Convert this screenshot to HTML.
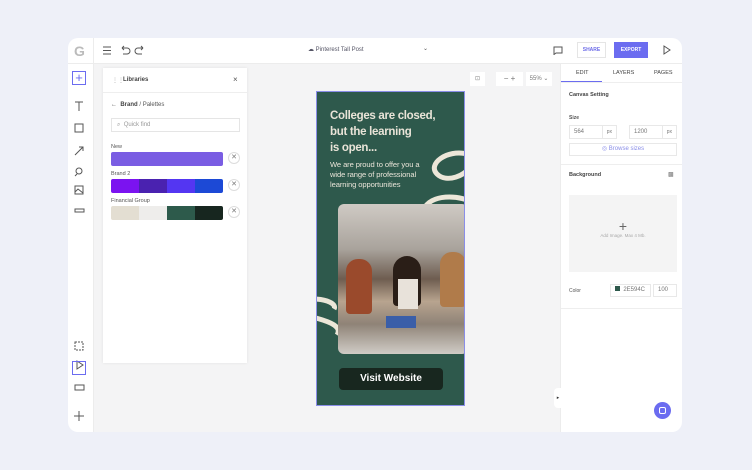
<!DOCTYPE html><html><head><style>
*{box-sizing:border-box;margin:0;padding:0}
body{width:752px;height:470px;background:#eef0f8;font-family:"Liberation Sans",sans-serif;position:relative;overflow:hidden;color:#333}
.a{position:absolute}
.card{left:68px;top:38px;width:614px;height:394px;background:#fff;border-radius:10px;overflow:hidden}
.t{font-size:6px;color:#555}
.ic{stroke:#555;fill:none;stroke-width:1}
</style></head><body>
<div class="a card">
 <div class="a" style="left:26px;top:26px;width:467px;height:368px;background:#f4f4f5"></div>
 <div class="a" style="left:0;top:25px;width:614px;height:1px;background:#ececec"></div>
 <div class="a" style="left:25px;top:0;width:1px;height:394px;background:#ececec"></div>
 <div class="a" style="left:492px;top:26px;width:1px;height:368px;background:#ececec"></div>
 <div class="a" style="left:6px;top:5px;font-size:14px;font-weight:bold;color:#bbb">G</div>
 <svg class="a" style="left:34px;top:7px" width="44" height="12"><g class="ic"><path d="M1 2h8M1 5.5h8M1 9h8"/><path d="M20 3h5a3 3 0 010 6h-4M20 3l2-2M20 3l2 2"/><path d="M41 3h-5a3 3 0 000 6h4M41 3l-2-2M41 3l-2 2"/></g></svg>
 <div class="a t" style="left:240px;top:8px;color:#556">☁ Pinterest Tall Post</div>
 <div class="a t" style="left:355px;top:7px">⌄</div>
 <svg class="a" style="left:485px;top:8px" width="10" height="9"><path class="ic" d="M1 1h8v6H3l-2 1.5z"/></svg>
 <div class="a" style="left:509px;top:4px;width:29px;height:16px;border:1px solid #e5e5e5;font-size:5px;color:#6d6ce8;font-weight:bold;text-align:center;line-height:14px">SHARE</div>
 <div class="a" style="left:546px;top:4px;width:34px;height:16px;background:#6b6cf0;font-size:5px;color:#fff;font-weight:bold;text-align:center;line-height:16px">EXPORT</div>
 <svg class="a" style="left:595px;top:7px" width="8" height="10"><path class="ic" d="M1 1l6 4-6 4z"/></svg>
 <div class="a" style="left:4px;top:33px;width:14px;height:14px;border:1px solid #6b6cf0;color:#6b6cf0;font-size:13px;line-height:11px;text-align:center">+</div>
 <svg class="a" style="left:6px;top:62px" width="14" height="120"><g class="ic"><path d="M1 2h8M5 2v9"/><rect x="1" y="24" width="8" height="8"/><path d="M1 55l8-8M5 47h4v4"/><circle cx="5" cy="71" r="3"/><path d="M3 74l-2 2"/><rect x="1" y="86" width="8" height="8"/><path d="M1 92l3-3 5 4"/><rect x="1" y="109" width="9" height="3"/></g></svg>
 <svg class="a" style="left:6px;top:303px" width="14" height="80"><g class="ic"><rect x="1" y="1" width="8" height="8" stroke-dasharray="2 1"/><path d="M3 20l6 4-6 4z"/><rect x="1" y="44" width="9" height="5"/><path d="M5 70v10M0 75h10"/></g></svg>
 <div class="a" style="left:4px;top:323px;width:14px;height:14px;border:1px solid #6b6cf0"></div>
 <div class="a" style="left:35px;top:30px;width:144px;height:295px;background:#fff;box-shadow:0 0 3px rgba(0,0,0,.08)">
  <div class="a t" style="left:9px;top:9px;color:#aaa">⋮⋮</div>
  <div class="a" style="left:20px;top:9px;font-size:6px;font-weight:bold;color:#444">Libraries</div>
  <div class="a t" style="left:130px;top:7px;font-size:8px">×</div>
  <div class="a" style="left:0;top:24px;width:144px;height:1px;background:#eee"></div>
  <div class="a t" style="left:8px;top:34px">←&nbsp; <b style="color:#444">Brand</b> / Palettes</div>
  <div class="a" style="left:8px;top:50px;width:129px;height:14px;border:1px solid #e5e5e5;font-size:6px;color:#999;line-height:12px;padding-left:5px">⌕ &nbsp;Quick find</div>
  <div class="a t" style="left:8px;top:76px;font-size:5.5px">New</div>
  <div class="a" style="left:8px;top:84px;width:112px;height:14px;background:#7a5de3;border-radius:2px"></div>
  <div class="a t" style="left:8px;top:103px;font-size:5.5px">Brand 2</div>
  <div class="a" style="left:8px;top:111px;width:112px;height:14px;border-radius:2px;overflow:hidden;display:flex"><i style="flex:1;background:#7b13f0"></i><i style="flex:1;background:#4a22b0"></i><i style="flex:1;background:#5436f2"></i><i style="flex:1;background:#1c49d6"></i></div>
  <div class="a t" style="left:8px;top:130px;font-size:5.5px">Financial Group</div>
  <div class="a" style="left:8px;top:138px;width:112px;height:14px;border-radius:2px;overflow:hidden;display:flex"><i style="flex:1;background:#e3ded2"></i><i style="flex:1;background:#eeedeb"></i><i style="flex:1;background:#2d5a4b"></i><i style="flex:1;background:#17261f"></i></div>
  <div class="a" style="left:125px;top:84px;width:12px;height:12px;border:1px solid #ddd;border-radius:50%;font-size:7px;text-align:center;line-height:10px;color:#777">✕</div>
  <div class="a" style="left:125px;top:111px;width:12px;height:12px;border:1px solid #ddd;border-radius:50%;font-size:7px;text-align:center;line-height:10px;color:#777">✕</div>
  <div class="a" style="left:125px;top:138px;width:12px;height:12px;border:1px solid #ddd;border-radius:50%;font-size:7px;text-align:center;line-height:10px;color:#777">✕</div>
 </div>
 <div class="a" style="left:402px;top:34px;width:15px;height:14px;background:#fff;font-size:6px;text-align:center;line-height:14px;color:#888">⊡</div>
 <div class="a" style="left:428px;top:34px;width:27px;height:14px;background:#fff;font-size:8px;text-align:center;line-height:13px;color:#777">− +</div>
 <div class="a" style="left:458px;top:34px;width:26px;height:14px;background:#fff;font-size:6px;text-align:center;line-height:14px;color:#777">55% ⌄</div>
 <div class="a" style="left:248px;top:53px;width:149px;height:315px;background:#2e594c;border:1px solid #8a8ee8;overflow:hidden">
  <svg class="a" style="left:0;top:0" width="149" height="315"><g fill="none" stroke="#ece6d8" stroke-width="5"><path d="M150 62c-20 -5-40 10-30 20s30 0 30-5"/><path d="M108 115c10-15 40-10 45-5"/><path d="M-5 207c15 0 25 5 22 10"/><path d="M-5 225c20 5 30 10 25 18"/></g></svg>
  <div class="a" style="left:13px;top:16px;font-size:11.5px;font-weight:bold;color:#e9e4d8;line-height:16px;letter-spacing:-0.3px;white-space:nowrap">Colleges are closed,<br>but the learning<br>is open...</div>
  <div class="a" style="left:13px;top:68px;font-size:7.6px;color:#e9e4d8;line-height:10px;white-space:nowrap;letter-spacing:-0.1px">We are proud to offer you a<br>wide range of professional<br>learning opportunities</div>
  <div class="a" style="left:21px;top:112px;width:130px;height:150px;border-radius:6px;background:linear-gradient(180deg,#cfcac4 0%,#a9a39c 30%,#6e5d50 50%,#b8a48f 65%,#8f8377 80%,#d0ccc6 100%)">
   <div class="a" style="left:8px;top:55px;width:26px;height:55px;background:#9a4a2c;border-radius:12px 12px 4px 4px"></div>
   <div class="a" style="left:55px;top:52px;width:28px;height:50px;background:#2a1e17;border-radius:14px 14px 4px 4px"></div>
   <div class="a" style="left:102px;top:48px;width:26px;height:55px;background:#b07b4a;border-radius:12px 12px 4px 4px"></div>
   <div class="a" style="left:60px;top:75px;width:20px;height:30px;background:#e8e2da"></div>
   <div class="a" style="left:48px;top:112px;width:30px;height:12px;background:#3a5ea8"></div>
  </div>
  <div class="a" style="left:22px;top:276px;width:104px;height:22px;border-radius:4px;background:#18271f;color:#fff;font-size:10px;font-weight:bold;text-align:center;line-height:22px">Visit Website</div>
 </div>
 <div class="a" style="left:486px;top:350px;width:8px;height:20px;background:#fff;border-radius:4px 0 0 4px;font-size:5px;line-height:20px;text-align:center">▸</div>
 <div class="a t" style="left:508px;top:32px;font-size:5.5px;color:#444">EDIT</div>
 <div class="a t" style="left:545px;top:32px;font-size:5.5px;color:#444">LAYERS</div>
 <div class="a t" style="left:586px;top:32px;font-size:5.5px;color:#444">PAGES</div>
 <div class="a" style="left:493px;top:43px;width:41px;height:1px;background:#6b6cf0"></div>
 <div class="a" style="left:493px;top:44px;width:121px;height:1px;background:#eee"></div>
 <div class="a" style="left:501px;top:54px;font-size:5.5px;font-weight:bold;color:#444">Canvas Setting</div>
 <div class="a" style="left:501px;top:77px;font-size:5px;font-weight:bold;color:#555">Size</div>
 <div class="a t" style="left:501px;top:87px;width:48px;height:14px;border:1px solid #e8e8e8;line-height:12px;padding-left:4px;color:#777">564<span style="float:right;border-left:1px solid #e8e8e8;padding:0 4px;font-size:5px">px</span></div>
 <div class="a t" style="left:561px;top:87px;width:48px;height:14px;border:1px solid #e8e8e8;line-height:12px;padding-left:4px;color:#777">1200<span style="float:right;border-left:1px solid #e8e8e8;padding:0 4px;font-size:5px">px</span></div>
 <div class="a t" style="left:501px;top:105px;width:108px;height:13px;border:1px solid #e8e8e8;line-height:11px;text-align:center;color:#8a8ee8">◎ Browse sizes</div>
 <div class="a" style="left:493px;top:126px;width:121px;height:1px;background:#eee"></div>
 <div class="a" style="left:501px;top:134px;font-size:5.5px;font-weight:bold;color:#444">Background</div>
 <div class="a t" style="left:600px;top:133px;color:#777">▩</div>
 <div class="a" style="left:501px;top:157px;width:108px;height:77px;background:#f4f4f4;text-align:center">
  <div style="font-size:14px;color:#666;margin-top:24px;line-height:14px">+</div>
  <div style="font-size:4.5px;color:#aaa">Add Image. Max 4 Mb.</div></div>
 <div class="a" style="left:501px;top:250px;font-size:5px;color:#555">Color</div>
 <div class="a t" style="left:542px;top:246px;width:41px;height:13px;border:1px solid #e8e8e8;line-height:11px;padding-left:4px;color:#777"><span style="display:inline-block;width:5px;height:5px;background:#2e594c"></span>&nbsp; 2E594C</div>
 <div class="a t" style="left:585px;top:246px;width:24px;height:13px;border:1px solid #e8e8e8;line-height:11px;padding-left:4px;color:#777">100</div>
 <div class="a" style="left:493px;top:270px;width:121px;height:1px;background:#eee"></div>
 <div class="a" style="left:586px;top:364px;width:17px;height:17px;border-radius:50%;background:#6b6cf0"><div style="width:7px;height:7px;border:1.3px solid #fff;border-radius:2px;margin:5px"></div></div>
</div>
</body></html>
